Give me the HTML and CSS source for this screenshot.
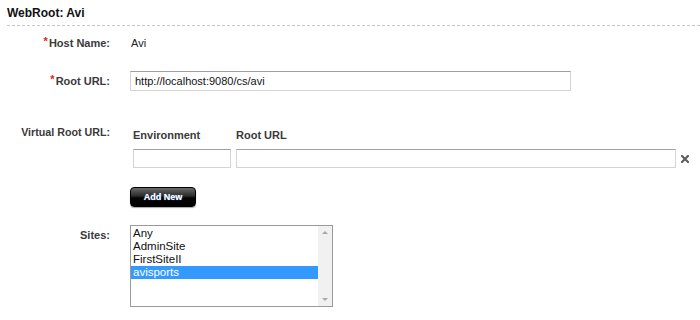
FILE: index.html
```html
<!DOCTYPE html>
<html lang="en">
<head>
  <meta charset="UTF-8">
  <title>WebRoot: Avi</title>
  <link rel="stylesheet" href="styles.css">
</head>
<body>
  <h1 class="title">WebRoot: Avi</h1>

  <div class="form">
    <!-- host name -->
    <div class="row row-host">
      <label class="label"><span class="req">*</span>Host Name:</label>
      <span class="value">Avi</span>
    </div>

    <!-- root url -->
    <div class="row row-root">
      <label class="label" for="rootUrl"><span class="req">*</span>Root URL:</label>
      <input type="text" id="rootUrl" class="text-input root-input" value="http://localhost:9080/cs/avi">
    </div>

    <!-- virtual root urls -->
    <div class="row row-virtual">
      <label class="label label-top">Virtual Root URL:</label>
      <div class="vtable">
        <span class="vhead">Environment</span>
        <span class="vhead">Root URL</span>
        <span></span>
        <input type="text" class="text-input env-input">
        <input type="text" class="text-input vurl-input">
        <span class="remove" title="Remove">
          <svg width="8" height="8" viewBox="0 0 8 8"><path d="M1 1L7 7M7 1L1 7" stroke="#5e5e5e" stroke-width="2.2" stroke-linecap="square"/></svg>
        </span>
      </div>
    </div>

    <div class="row row-button">
      <span></span>
      <button class="btn-dark">Add New</button>
    </div>

    <!-- sites -->
    <div class="row row-sites">
      <label class="label label-top sites-label">Sites:</label>
      <div class="listbox">
        <ul class="options">
          <li>Any</li>
          <li>AdminSite</li>
          <li>FirstSiteII</li>
          <li class="selected">avisports</li>
        </ul>
        <div class="scroll">
          <span class="arrow up"></span>
          <span class="arrow down"></span>
        </div>
      </div>
    </div>
  </div>
</body>
</html>
```

FILE: styles.css
```css
body {
  margin: 0;
  padding: 0 0 0 7px;
  font-family: "Liberation Sans", Arial, sans-serif;
  font-size: 11px;
  color: #222;
  background: #fff;
}

.title {
  margin: 0;
  padding-top: 5px;
  height: 20px;
  line-height: 16px;
  font-size: 12px;
  font-weight: bold;
  color: #111;
  border-bottom: 1px dashed #c8c8c8;
}

.row {
  display: grid;
  grid-template-columns: 103px 1fr;
  column-gap: 20px;
  align-items: center;
}
.label {
  text-align: right;
  font-weight: bold;
  color: #3a3a3a;
  line-height: 14px;
}
.label-top {
  align-self: start;
  font-size: 10.7px;
}
.req {
  color: #d22;
  font-weight: bold;
  position: relative;
  top: -2px;
  margin-right: 1px;
}
.value {
  padding-left: 1px;
  color: #222;
}

.row-host {
  height: 34px;
}
.row-root {
  margin-top: 11px;
}
.row-virtual {
  margin-top: 34px;
}
.row-button {
  margin-top: 19px;
}
.row-sites {
  margin-top: 18px;
}
.sites-label {
  padding-top: 3px;
  font-size: 11px;
}

.text-input {
  box-sizing: border-box;
  height: 20px;
  margin: 0;
  padding: 0 4px;
  border: 1px solid #d4d4d4;
  border-top-color: #a0a0a0;
  font-family: "Liberation Sans", Arial, sans-serif;
  font-size: 11px;
  color: #111;
  background: #fff;
  outline: none;
}
.root-input {
  width: 441px;
}

.vtable {
  display: grid;
  grid-template-columns: 98px 440px 20px;
  column-gap: 5px;
  row-gap: 7px;
  padding-left: 3px;
  align-items: center;
}
.vhead {
  font-weight: bold;
  color: #3a3a3a;
  line-height: 14px;
  padding-top: 3px;
}
.env-input,
.vurl-input {
  width: 100%;
  height: 19px;
}
.remove {
  display: flex;
  align-items: center;
  height: 19px;
}

.btn-dark {
  box-sizing: border-box;
  width: 66px;
  height: 20px;
  padding: 0;
  border: 1px solid #000;
  border-radius: 4px;
  background: linear-gradient(#6a6a6a 0%, #2a2a2a 45%, #050505 55%, #000 100%);
  box-shadow: 0 1px 1px rgba(0, 0, 0, 0.35);
  color: #fff;
  font-family: "Liberation Sans", Arial, sans-serif;
  font-size: 9px;
  font-weight: bold;
  text-shadow: 0 0 1px #6aa0ff;
}

.listbox {
  box-sizing: border-box;
  width: 203px;
  height: 82px;
  border: 1px solid #9a9a9a;
  display: flex;
  background: #fff;
}
.options {
  flex: 1;
  margin: 0;
  padding: 1px 0 0;
  list-style: none;
  font-size: 11.5px;
  line-height: 13px;
  color: #111;
}
.options li {
  padding-left: 2px;
}
.options .selected {
  background: #3399ff;
  color: #fff;
}
.scroll {
  width: 14px;
  background: #f1f1f1;
  position: relative;
}
.arrow {
  position: absolute;
  left: 4px;
  width: 0;
  height: 0;
  border-left: 3px solid transparent;
  border-right: 3px solid transparent;
}
.arrow.up {
  top: 5px;
  border-bottom: 3px solid #a8a8a8;
}
.arrow.down {
  bottom: 5px;
  border-top: 3px solid #a8a8a8;
}
```
